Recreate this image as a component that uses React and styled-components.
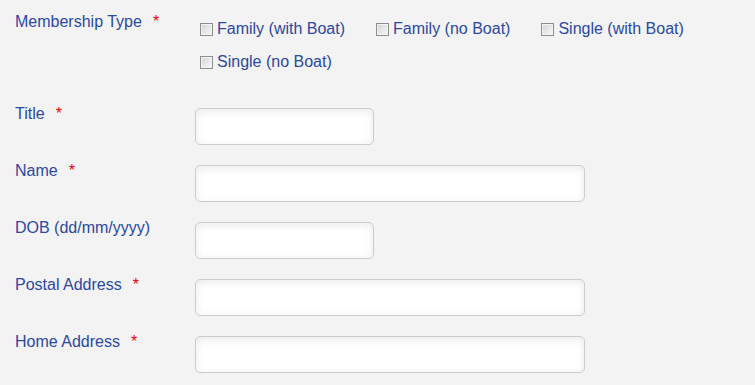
import React from 'react';
import styled, { createGlobalStyle } from 'styled-components';

const GlobalStyle = createGlobalStyle`
  html, body {
    margin: 0;
    padding: 0;
    background: #f3f3f3;
  }
  body {
    font-family: "Liberation Sans", Arial, sans-serif;
  }
`;

const MEMBERSHIP_TYPES = [
  'Family (with Boat)',
  'Family (no Boat)',
  'Single (with Boat)',
  'Single (no Boat)',
];

const FIELDS = [
  { label: 'Title', required: true, size: 'short' },
  { label: 'Name', required: true, size: 'long' },
  { label: 'DOB (dd/mm/yyyy)', required: false, size: 'short' },
  { label: 'Postal Address', required: true, size: 'long' },
  { label: 'Home Address', required: true, size: 'long' },
];

const App = () => {
  return (
    <>
      <GlobalStyle />
      <StForm>
        <StMembershipRow>
          <StLabel>
            Membership Type<StRequired>*</StRequired>
          </StLabel>
          <StOptions>
            {MEMBERSHIP_TYPES.map((type) => (
              <StOption key={type}>
                <StCheckbox type="checkbox" />
                {type}
              </StOption>
            ))}
          </StOptions>
        </StMembershipRow>

        {FIELDS.map((field) => (
          <StRow key={field.label}>
            <StLabel>
              {field.label}
              {field.required && <StRequired>*</StRequired>}
            </StLabel>
            <StInput type="text" $size={field.size} />
          </StRow>
        ))}
      </StForm>
    </>
  );
};

const StForm = styled.form`
  display: flex;
  flex-flow: column nowrap;
  padding: 13px 0 0 15px;
  color: #2b48a2;
  font-size: 16px;
`;

const StMembershipRow = styled.div`
  display: flex;
  align-items: flex-start;
  margin-bottom: 33px;
`;

const StRow = styled.div`
  display: flex;
  align-items: flex-start;
  margin-bottom: 17px;
`;

const StLabel = styled.label`
  flex: 0 0 180px;
  line-height: normal;
  cursor: default;
`;

const StRequired = styled.span`
  margin-left: 11px;
  color: #f00000;
`;

const StOptions = styled.div`
  display: flex;
  flex-flow: row wrap;
  column-gap: 26px;
  row-gap: 13px;
  margin-top: 6px;
  flex: 1;
`;

const StOption = styled.label`
  display: inline-flex;
  align-items: center;
  height: 20px;
  line-height: 20px;
  white-space: nowrap;
`;

const StCheckbox = styled.input`
  appearance: none;
  box-sizing: border-box;
  width: 13px;
  height: 13px;
  margin: 1px 4px 0 5px;
  border: 1px solid #8d8d8d;
  background: linear-gradient(135deg, #d2d2d2 0%, #e9e9e9 55%, #f7f7f7 100%);
  box-shadow: inset 0 0 0 1px #f4f4f4;
`;

const StInput = styled.input`
  box-sizing: border-box;
  width: ${({ $size }) => ($size === 'long' ? '390px' : '179px')};
  height: 37px;
  margin-top: 3px;
  padding: 4px 8px;
  border: 1px solid #cccccc;
  border-radius: 5px;
  background: #ffffff;
  box-shadow: inset 0 2px 8px rgba(0, 0, 0, 0.09);
  font-family: "Liberation Sans", Arial, sans-serif;
  font-size: 14px;
  outline: none;
`;

export default App;
